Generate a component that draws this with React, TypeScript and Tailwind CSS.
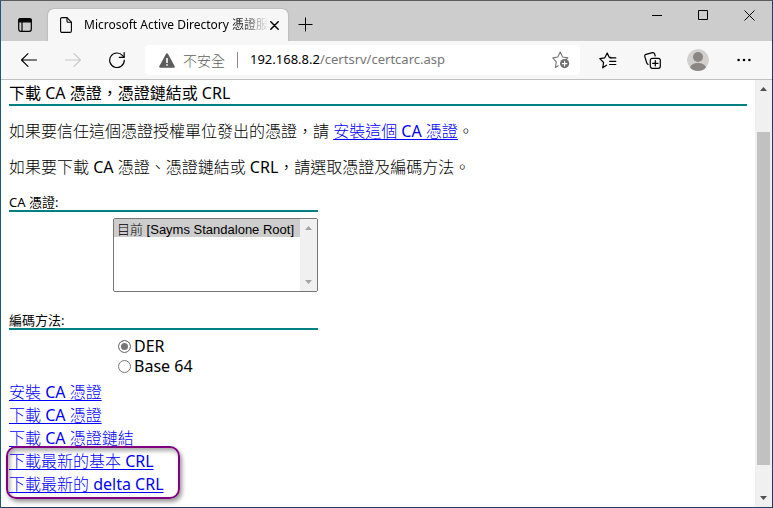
import React from 'react';

const strokeIcon = {
  fill: 'none',
  stroke: 'currentColor',
  strokeLinecap: 'round' as const,
  strokeLinejoin: 'round' as const,
};

function TabActionsIcon() {
  return (
    <svg width="14" height="14" viewBox="0 0 14 14" {...strokeIcon} strokeWidth="1.2">
      <rect x="0.7" y="0.7" width="12.6" height="12.6" rx="2" />
      <path d="M1 1.2h12v2.6H1z" fill="currentColor" />
      <path d="M4 4v9" />
    </svg>
  );
}

function PageIcon() {
  return (
    <svg width="12" height="16" viewBox="0 0 12 16" className="shrink-0" {...strokeIcon} strokeWidth="1.1">
      <path d="M2 .6h5l4.4 4.6V14a1.4 1.4 0 0 1-1.4 1.4H2A1.4 1.4 0 0 1 .6 14V2A1.4 1.4 0 0 1 2 .6z" />
      <path d="M7 .8v3.4a1 1 0 0 0 1 1h3.2" />
    </svg>
  );
}

function ArrowIcon({ forward = false }: { forward?: boolean }) {
  return (
    <svg width="16" height="14" viewBox="0 0 16 14" {...strokeIcon} strokeWidth="1.1">
      <path d={forward ? 'M.5 7h15M9 .6 15.5 7 9 13.4' : 'M15.5 7H.5M7 .6.5 7 7 13.4'} />
    </svg>
  );
}

function ReloadIcon() {
  return (
    <svg width="16" height="16" viewBox="0 0 16 16" {...strokeIcon} strokeWidth="1.2">
      <path d="M15.3 8.2A7.3 7.3 0 1 1 13.6 3.6L15 5.2" />
      <path d="M15.2.6v4.7h-4.9" />
    </svg>
  );
}

function WarningIcon() {
  return (
    <svg width="16" height="15" viewBox="0 0 16 15">
      <path d="M7.1.8a1 1 0 0 1 1.8 0l6.8 12.5a1 1 0 0 1-.9 1.5H1.2a1 1 0 0 1-.9-1.5z" fill="#5c5c5c" />
      <path d="M7.2 5h1.6v5H7.2zM7.2 11.2h1.6v1.6H7.2z" fill="#fff" />
    </svg>
  );
}

function StarAddIcon() {
  return (
    <svg width="18" height="18" viewBox="0 0 18 18" {...strokeIcon} strokeWidth="1.1">
      <path d="M6.3 14.8 3.4 16.4l.9-5.6L.8 6.9l5-.9L8.2 1l2.4 5 5.2.9-1.6 1.6" />
      <circle cx="12.6" cy="12.6" r="4.6" fill="#6e6e6e" stroke="none" />
      <path d="M12.6 10.3v4.6M10.3 12.6h4.6" stroke="#fff" />
    </svg>
  );
}

function FavoritesIcon() {
  return (
    <svg width="18" height="17" viewBox="0 0 18 17" {...strokeIcon} strokeWidth="1.2">
      <path d="M7.5 13.2 3.7 15.8l.9-5.3L.8 6.6l5-.8L8.2 1l2 4.2 2 .5" />
      <path d="M11 5.9h5.8M10.6 9.3h6.2M10.6 12.5h6.2" />
    </svg>
  );
}

function CollectionsIcon() {
  return (
    <svg width="17" height="17" viewBox="0 0 17 17" {...strokeIcon} strokeWidth="1.2">
      <rect x="6.3" y="6.3" width="10" height="10" rx="2" />
      <path d="M11.3 8.6v5.4M8.6 11.3H14" />
      <path d="M4.1 12.4C3.3 12.1 3 11.6 2.8 11L.8 4.6C.5 3.4 1 2.6 2 2.3L8.5.7c1.1-.2 1.8.3 2.1 1.3l.6 2" />
    </svg>
  );
}

function AvatarIcon() {
  return (
    <svg width="22" height="22" viewBox="0 0 22 22">
      <clipPath id="avatar-clip">
        <circle cx="11" cy="11" r="11" />
      </clipPath>
      <g clipPath="url(#avatar-clip)">
        <circle cx="11" cy="11" r="11" fill="#d2d0ce" />
        <circle cx="11" cy="8" r="5" fill="#8a8684" />
        <ellipse cx="11" cy="19" rx="8" ry="5" fill="#8a8684" />
      </g>
    </svg>
  );
}

function Triangle({ down = false }: { down?: boolean }) {
  return (
    <svg width="7" height="4" viewBox="0 0 7 4" fill="currentColor">
      <path d={down ? 'M0 0h7L3.5 4z' : 'M0 4h7L3.5 0z'} />
    </svg>
  );
}

function IconButton({ label, className, children }: { label: string; className: string; children: React.ReactNode }) {
  return (
    <button type="button" aria-label={label} className={`flex shrink-0 items-center justify-center ${className}`}>
      {children}
    </button>
  );
}

function TabStrip() {
  return (
    <header className="flex h-10 bg-[#cdcdcd]">
      <IconButton label="索引標籤動作" className="w-[47px] pt-2">
        <TabActionsIcon />
      </IconButton>
      <div className="mt-2 flex w-60 items-center rounded-t-md bg-[#f7f7f7] pr-2.5 pl-3 shadow-[0_0_2px_#999]">
        <PageIcon />
        <span className="ml-3 shrink-0 bg-linear-to-r from-black from-80% to-[#f7f7f7] bg-clip-text text-[12px] whitespace-nowrap text-transparent">
          Microsoft Active Directory 憑證服
        </span>
        <IconButton label="關閉索引標籤" className="ml-auto h-5 w-3">
          <svg width="9" height="9" viewBox="0 0 9 9" className="shrink-0" {...strokeIcon} strokeWidth="1.5">
            <path d="m.8.8 7.4 7.4M8.2.8.8 8.2" />
          </svg>
        </IconButton>
      </div>
      <IconButton label="新增索引標籤" className="w-[35px] pt-[7px]">
        <svg width="15" height="15" viewBox="0 0 15 15" stroke="currentColor">
          <path d="M7.5.5v14M.5 7.5h14" />
        </svg>
      </IconButton>
      <div className="ml-auto flex h-7">
        <IconButton label="最小化" className="w-[46px]">
          <svg width="10" height="11" viewBox="0 0 10 11" stroke="currentColor">
            <path d="M0 5.5h10" />
          </svg>
        </IconButton>
        <IconButton label="最大化" className="w-[46px]">
          <svg width="10" height="10" viewBox="0 0 10 10" fill="none" stroke="currentColor">
            <path d="M.5.5h9v9h-9z" />
          </svg>
        </IconButton>
        <IconButton label="關閉" className="w-[46px]">
          <svg width="11" height="11" viewBox="0 0 11 11" stroke="currentColor">
            <path d="m.5.5 10 10M10.5.5l-10 10" />
          </svg>
        </IconButton>
      </div>
    </header>
  );
}

function Toolbar() {
  return (
    <div className="flex h-[39px] items-center border-b border-[#c0c0c0] bg-[#f7f7f7] pr-1.5">
      <IconButton label="上一頁" className="ml-1.5 w-11">
        <ArrowIcon />
      </IconButton>
      <IconButton label="下一頁" className="w-11 text-[#c8c8c8]">
        <ArrowIcon forward />
      </IconButton>
      <IconButton label="重新整理" className="w-11">
        <ReloadIcon />
      </IconButton>
      <div className="ml-1.5 flex h-[30px] flex-1 items-center rounded bg-white pr-2.5 pl-3.5">
        <WarningIcon />
        <span className="ml-2 shrink-0 text-[14px] font-light text-[#606060]">不安全</span>
        <span className="ml-3 h-4 w-px shrink-0 bg-[#8a8a8a]" />
        <div className="ml-3 flex-1 text-[13px] whitespace-nowrap text-[#767676]">
          <span className="text-black">192.168.8.2</span>/certsrv/certcarc.asp
        </div>
        <IconButton label="加入我的最愛" className="text-[#767676]">
          <StarAddIcon />
        </IconButton>
      </div>
      <IconButton label="我的最愛" className="ml-1.5 w-11">
        <FavoritesIcon />
      </IconButton>
      <IconButton label="集錦" className="w-11">
        <CollectionsIcon />
      </IconButton>
      <IconButton label="設定檔" className="w-12">
        <AvatarIcon />
      </IconButton>
      <IconButton label="設定及其他" className="w-11">
        <svg width="14" height="4" viewBox="0 0 14 4" fill="currentColor">
          <circle cx="1.6" cy="2" r="1.3" />
          <circle cx="7" cy="2" r="1.3" />
          <circle cx="12.4" cy="2" r="1.3" />
        </svg>
      </IconButton>
    </div>
  );
}

function ContentLink({ children }: { children: React.ReactNode }) {
  return (
    <a href="#" className="block w-fit text-[#0000ff] underline underline-offset-2">
      {children}
    </a>
  );
}

function EncodingOption({ id, label, checked = false }: { id: string; label: string; checked?: boolean }) {
  return (
    <div className="flex h-5 items-center gap-[3px]">
      <input
        type="radio"
        id={id}
        name="encoding"
        defaultChecked={checked}
        className="size-[13px] appearance-none rounded-full border border-[#767676] bg-white checked:bg-[#767676] checked:shadow-[inset_0_0_0_2px_#fff]"
      />
      <label htmlFor={id}>{label}</label>
    </div>
  );
}

function CertificatePage() {
  return (
    <main className="min-w-0 flex-1 px-2 pt-0.5 font-['Noto_Sans','Noto_Sans_CJK_TC_Light','Noto_Sans_CJK_TC',sans-serif] text-[16px] leading-[22px]">
      <h1 className="border-b-2 border-[#008080] font-['Noto_Sans','Noto_Sans_CJK_TC',sans-serif]">
        下載 CA 憑證，憑證鏈結或 CRL
      </h1>
      <p className="mt-3.5">
        如果要信任這個憑證授權單位發出的憑證，請{' '}
        <a href="#" className="text-[#0000ff] underline underline-offset-2">
          安裝這個 CA 憑證
        </a>
        。
      </p>
      <p className="mt-3.5">如果要下載 CA 憑證、憑證鏈結或 CRL，請選取憑證及編碼方法。</p>
      <form className="w-[309px]">
        <label
          htmlFor="ca"
          className="mt-4 block border-b-2 border-[#008080] font-['Noto_Sans','Noto_Sans_CJK_TC',sans-serif] text-[13px] leading-4"
        >
          CA 憑證:
        </label>
        <div className="mt-1.5 ml-26 flex h-[74px] overflow-hidden rounded-xs border border-[#767676] bg-white">
          <select
            id="ca"
            size={4}
            defaultValue="current"
            className="h-full min-w-0 flex-1 appearance-none overflow-hidden font-['Liberation_Sans','Noto_Sans_CJK_TC_Light','Noto_Sans_CJK_TC',sans-serif] text-[13px] outline-none"
          >
            <option value="current" className="h-[18px] bg-[#cdcdcd] px-[3px] py-0 leading-[18px] text-black">
              目前 [Sayms Standalone Root]
            </option>
          </select>
          <div className="flex w-[17px] flex-col items-center justify-between bg-[#f0f0f0] py-[7px] text-[#a3a3a3]">
            <Triangle />
            <Triangle down />
          </div>
        </div>
        <fieldset className="mt-5">
          <legend className="w-full border-b-2 border-[#008080] font-['Noto_Sans','Noto_Sans_CJK_TC',sans-serif] text-[13px] leading-4">
            編碼方法:
          </legend>
          <div className="mt-1.5 ml-[109px]">
            <EncodingOption id="der" label="DER" checked />
            <EncodingOption id="base64" label="Base 64" />
          </div>
        </fieldset>
      </form>
      <nav className="mt-[5px] leading-[23px]">
        <ContentLink>安裝 CA 憑證</ContentLink>
        <ContentLink>下載 CA 憑證</ContentLink>
        <ContentLink>下載 CA 憑證鏈結</ContentLink>
        <div className="relative w-fit">
          <ContentLink>下載最新的基本 CRL</ContentLink>
          <ContentLink>下載最新的 delta CRL</ContentLink>
          <div className="pointer-events-none absolute -top-1 -left-[3px] h-[53px] w-[174px] rounded-[10px] border-2 border-[#800080] shadow-[2px_3px_4px_#0006,inset_2px_3px_4px_#0005]" />
        </div>
      </nav>
    </main>
  );
}

function PageScrollbar() {
  return (
    <div className="flex w-[17px] shrink-0 flex-col items-center bg-[#f0f0f0] px-0.5 py-[7px] text-[#505050]">
      <Triangle />
      <div className="mt-[41px] mb-[31px] w-full flex-1 bg-[#c1c1c1]" />
      <Triangle down />
    </div>
  );
}

export default function App() {
  return (
    <div
      lang="zh-Hant"
      className="flex h-screen flex-col overflow-hidden border border-t-[#5c5c60] border-r-[#1a3d6e] border-b-[#1b4266] border-l-[#1b5878] bg-white font-['Noto_Sans','Noto_Sans_CJK_TC',sans-serif] text-black"
    >
      <TabStrip />
      <Toolbar />
      <div className="flex min-h-0 flex-1 overflow-hidden">
        <CertificatePage />
        <PageScrollbar />
      </div>
    </div>
  );
}
